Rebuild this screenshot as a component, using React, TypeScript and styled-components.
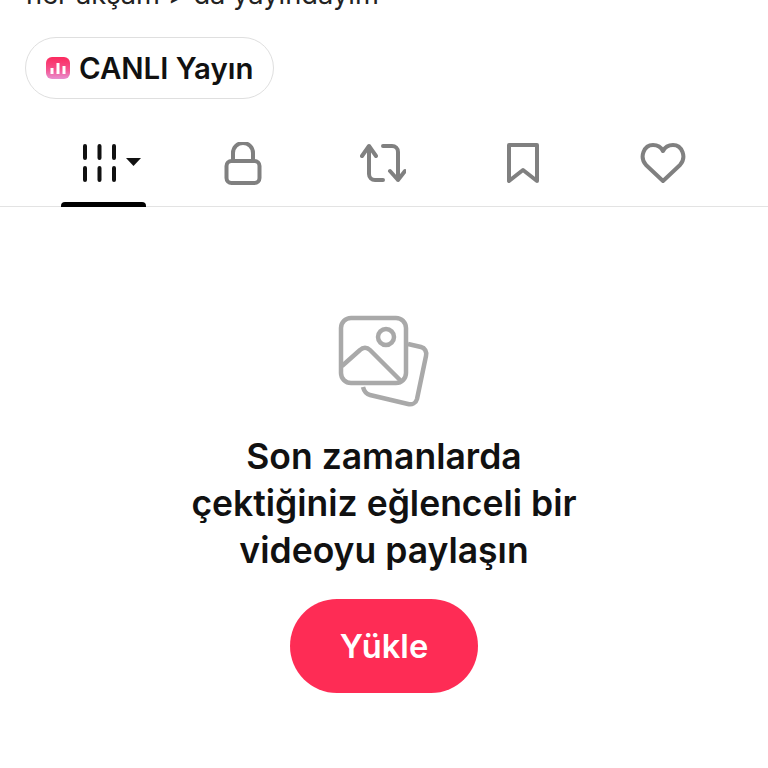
import React from 'react';
import styled, { createGlobalStyle } from 'styled-components';

const GlobalStyle = createGlobalStyle`
  html, body {
    margin: 0;
    padding: 0;
    width: 768px;
    height: 768px;
    overflow: hidden;
    background: #fff;
    font-family: Inter, "Liberation Sans", sans-serif;
  }
`;

function GridIcon() {
  return (
    <svg width="80" height="42" viewBox="0 0 80 42">
      <g stroke="#111" strokeWidth="4" strokeLinecap="round">
        <path d="M22 4v12M36.500 4v12M51 4v12M22 26v12M36.500 26v12M51 26v12" />
      </g>
      <path d="M63 16h15l-7.500 8z" fill="#111" />
    </svg>
  );
}

function LockIcon() {
  return (
    <svg width="38" height="44" viewBox="0 0 38 44" fill="none" stroke="#808080" strokeWidth="4">
      <path d="M9 19v-8a10 10 0 0 1 20 0v8" />
      <rect x="2.500" y="19" width="33" height="22" rx="5" />
    </svg>
  );
}

function RepostIcon() {
  return (
    <svg width="46" height="42" viewBox="0 0 46 42" fill="none" stroke="#808080" strokeWidth="4" strokeLinecap="round" strokeLinejoin="round">
      <path d="M2 14 9 4l7 10M9 5v27a6 6 0 0 0 6 6h8" />
      <path d="M23 4h9a6 6 0 0 1 6 6v28M30 29l8 9 7-9" />
    </svg>
  );
}

function BookmarkIcon() {
  return (
    <svg width="34" height="42" viewBox="0 0 34 42" fill="none" stroke="#808080" strokeWidth="4" strokeLinejoin="round">
      <path d="M3 3h28v36L17 28 3 39z" />
    </svg>
  );
}

function HeartIcon() {
  return (
    <svg width="46" height="42" viewBox="0 0 46 42" fill="none" stroke="#808080" strokeWidth="4" strokeLinejoin="round">
      <path d="M23 39 6 23C-1 15 4 3 13 3c5 0 8 2 10 6 2-4 5-6 10-6 9 0 14 12 7 20z" />
    </svg>
  );
}

function PhotosIcon() {
  return (
    <svg width="92" height="94" viewBox="0 0 92 94" fill="none" stroke="#a9a9a9" strokeWidth="4.500" strokeLinejoin="round">
      <path d="M70 29l13 3c4 1 6 5 5 9l-9 43c-1 4-5 6-9 5l-38-9c-4-1-6-4-7-8" />
      <rect x="3" y="3" width="65" height="65" rx="10" fill="#fff" />
      <circle cx="48" cy="22" r="8" />
      <path d="M4 51 22 35c3-3 7-3 10 0l32 32" />
    </svg>
  );
}

const tabs = [
  { key: 'grid', icon: <GridIcon />, active: true },
  { key: 'lock', icon: <LockIcon /> },
  { key: 'repost', icon: <RepostIcon /> },
  { key: 'saved', icon: <BookmarkIcon /> },
  { key: 'liked', icon: <HeartIcon /> },
];

export default function App() {
  return (
    <Page>
      <GlobalStyle />
      <Bio>her akşam &gt; da yayındayım</Bio>
      <LivePill>
        <LiveBadge>
          <svg width="24" height="22" viewBox="0 0 24 22">
            <defs>
              <linearGradient id="live" x1="0" y1="0" x2="0" y2="1">
                <stop offset="0" stopColor="#fb2a5e" />
                <stop offset="0.55" stopColor="#f5518c" />
                <stop offset="1" stopColor="#e88fd0" />
              </linearGradient>
            </defs>
            <rect width="24" height="22" rx="6" fill="url(#live)" />
            <path d="M6 11v6M12 6v11M18 9v8" stroke="#fff" strokeWidth="3" />
          </svg>
        </LiveBadge>
        CANLI Yayın
      </LivePill>
      <TabBar>
        {tabs.map((tab) => (
          <Tab key={tab.key} $active={tab.active}>
            {tab.icon}
          </Tab>
        ))}
      </TabBar>
      <Empty>
        <PhotosIcon />
        <Heading>
          Son zamanlarda
          <br />
          çektiğiniz eğlenceli bir
          <br />
          videoyu paylaşın
        </Heading>
        <UploadButton>Yükle</UploadButton>
      </Empty>
    </Page>
  );
}

const Page = styled.div`
  width: 768px;
  height: 768px;
  overflow: hidden;
  background: #fff;
  color: #111;
`;

const Bio = styled.div`
  margin-top: -22px;
  padding-left: 26px;
  height: 59px;
  font-size: 27.300px;
  line-height: 34px;
  color: #222;
`;

const LivePill = styled.div`
  display: inline-flex;
  align-items: center;
  gap: 9px;
  box-sizing: border-box;
  margin-left: 25px;
  height: 62px;
  width: 249px;
  padding-left: 20px;
  border: 1.500px solid #dfdfdf;
  border-radius: 31px;
  font-size: 29.400px;
  font-weight: 600;
  color: #111;
`;

const LiveBadge = styled.span`
  display: flex;
`;

const TabBar = styled.div`
  display: grid;
  grid-template-columns: repeat(5, 140px);
  padding-left: 33px;
  margin-top: 4px;
  height: 104px;
  box-sizing: border-box;
  border-bottom: 1.500px solid #e3e3e3;
`;

const Tab = styled.div<{ $active?: boolean }>`
  position: relative;
  display: flex;
  justify-content: center;
  align-items: flex-start;
  padding-top: 39px;

  ${(p) =>
    p.$active &&
    `
    &::after {
      content: '';
      position: absolute;
      left: 28px;
      bottom: -1px;
      width: 85px;
      height: 5px;
      border-radius: 4px 4px 0 0;
      background: #000;
    }
  `}
`;

const Empty = styled.div`
  display: flex;
  flex-direction: column;
  align-items: center;
  padding-top: 108px;
`;

const Heading = styled.div`
  margin-top: 24px;
  font-size: 35.500px;
  line-height: 47px;
  font-weight: 600;
  text-align: center;
  color: #111;
`;

const UploadButton = styled.div`
  display: flex;
  align-items: center;
  justify-content: center;
  margin-top: 25px;
  width: 188px;
  height: 94px;
  border-radius: 47px;
  background: #fe2c55;
  color: #fff;
  font-size: 32.700px;
  font-weight: 600;
`;
